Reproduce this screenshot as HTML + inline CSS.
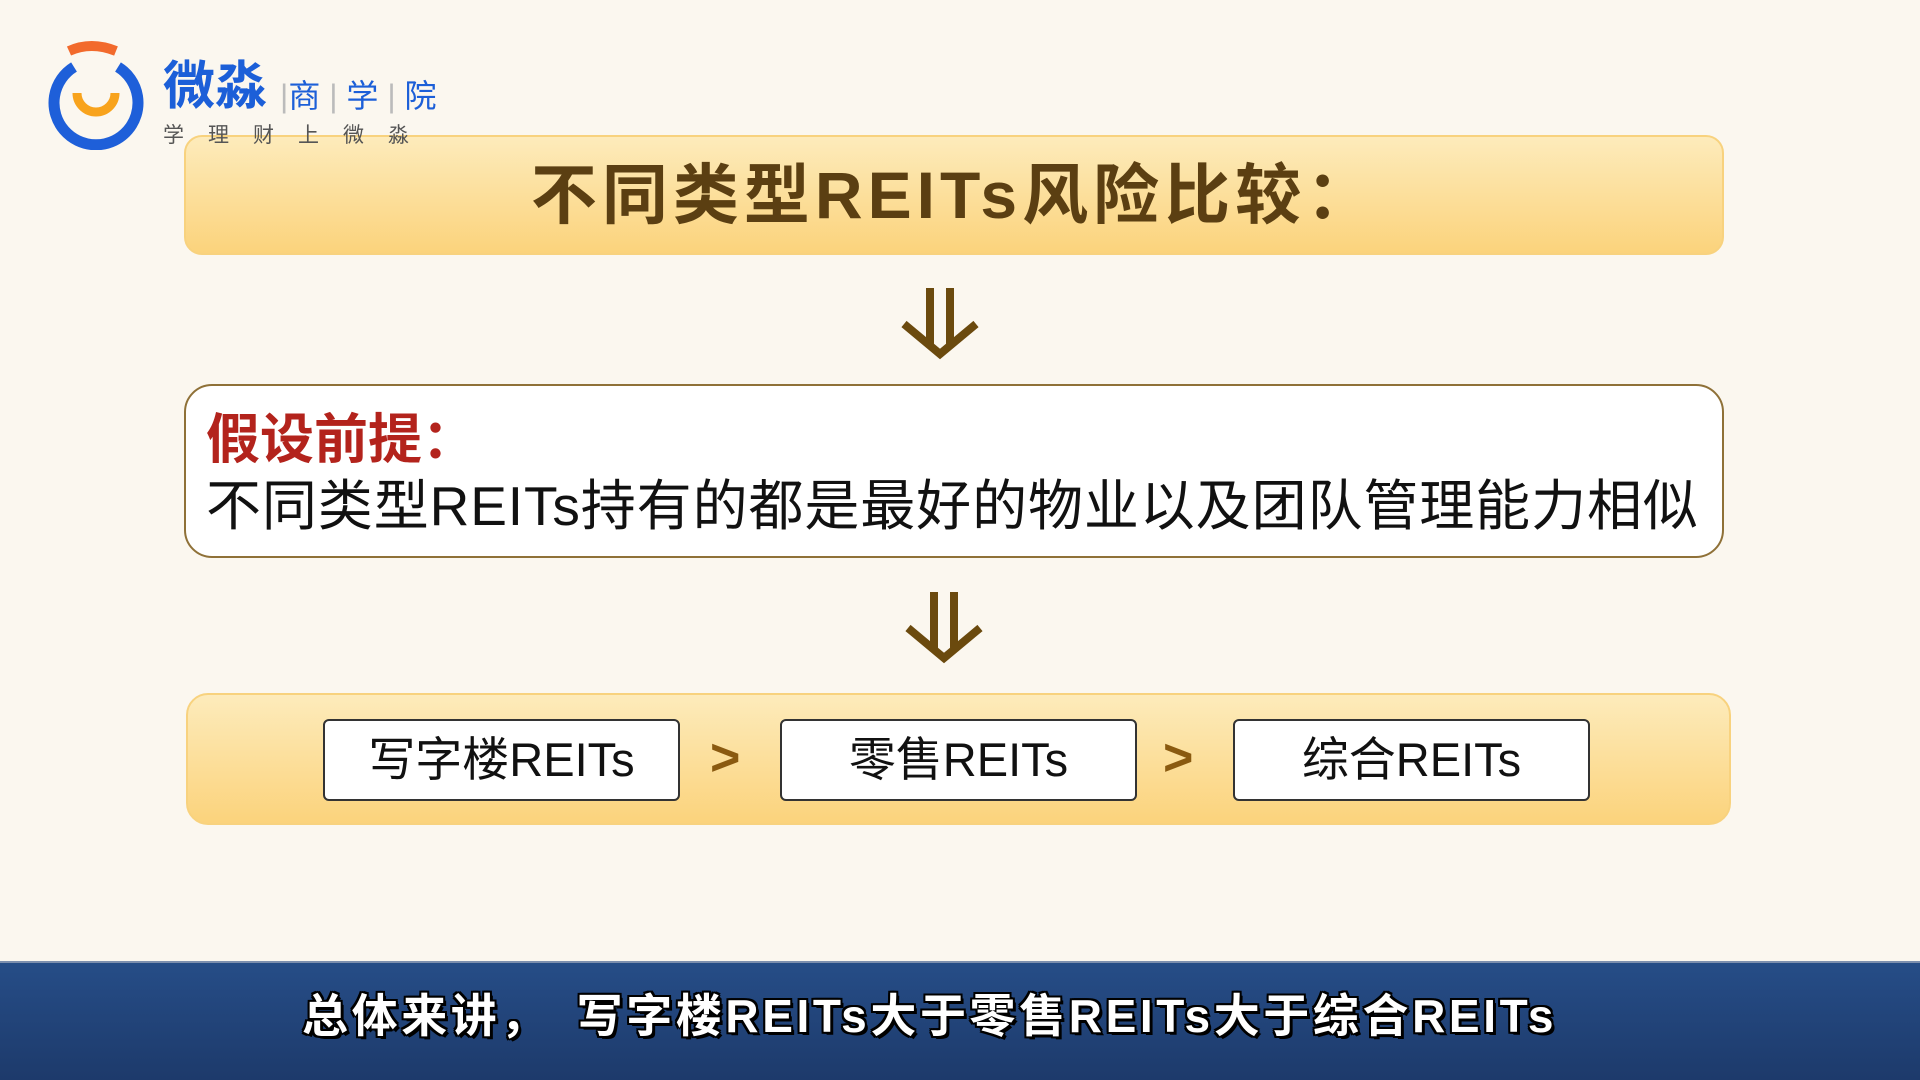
<!DOCTYPE html>
<html><head><meta charset="utf-8"><style>
*{margin:0;padding:0;box-sizing:border-box}
body{width:1920px;height:1080px;overflow:hidden;background:#fbf7ef;position:relative;font-family:"Liberation Sans","Noto Sans CJK SC",sans-serif}
.abs{position:absolute}
.yb{background:linear-gradient(#fdebbb,#fbd37c);border:2px solid #f8d27e}
.title{left:184px;top:135px;width:1540px;height:120px;border-radius:18px;text-align:center;font-size:66px;letter-spacing:5px;font-weight:bold;color:#5b3f12;line-height:116px}
.b2{left:184px;top:384px;width:1540px;height:174px;border-radius:28px;background:#fff;border:2px solid #8f7138}
.b2 .l1{position:absolute;left:20px;top:22px;font-size:54px;color:#b3231c;font-weight:bold;line-height:64px}
.b2 .l2{position:absolute;left:20px;top:88px;font-size:55px;letter-spacing:0.9px;color:#111;line-height:64px;white-space:nowrap}
.b3{left:186px;top:693px;width:1545px;height:132px;border-radius:22px}
.ib{top:719px;height:82px;width:357px;background:#fff;border:2px solid #333;border-radius:6px;text-align:center;font-size:47px;line-height:78px;color:#111}
.gt{top:728px;font-size:52px;color:#8a5a10;font-weight:bold}
.banner{left:0;top:961px;width:1920px;height:119px;background:linear-gradient(#264d87,#1d3a6b);border-top:2px solid #7d8fae}
.sub{left:302px;top:980px;font-size:46px;font-weight:bold;color:#fff;white-space:nowrap;letter-spacing:3.6px;
text-shadow:-2px 0 #000,2px 0 #000,0 -2px #000,0 2px #000,-2px -2px #000,2px 2px #000,-2px 2px #000,2px -2px #000,3px 3px #000}
</style></head><body>
<div class="abs yb title">不同类型REITs风险比较：</div>
<svg class="abs" style="left:36px;top:30px" width="120" height="120" viewBox="0 0 120 120">
<path d="M38 37 A42 42 0 1 0 82 37" fill="none" stroke="#1e5fd9" stroke-width="11"/>
<path d="M33 21 Q55 11 80 21" fill="none" stroke="#f26a2c" stroke-width="10"/>
<path d="M41 63 A17 17 0 0 0 79 63" fill="none" stroke="#f8a31c" stroke-width="9"/>
</svg>
<div class="abs" style="left:163px;top:58px;font-size:52px;color:#1c5fd8;font-weight:bold;line-height:58px">微淼</div>
<div class="abs" style="left:280px;top:76px;font-size:32px;color:#1c5fd8;line-height:40px;white-space:nowrap"><span style="color:#bbb">|</span>商 <span style="color:#bbb">|</span> 学 <span style="color:#bbb">|</span> 院</div>
<div class="abs" style="left:163px;top:119px;font-size:21px;color:#555;letter-spacing:24px;white-space:nowrap">学理财上微淼</div>
<svg class="abs" style="left:900px;top:288px" width="80" height="72" viewBox="0 0 80 72"><g fill="none" stroke="#6b4a0e" stroke-width="8"><path d="M30 0V58M50 0V58"/><path d="M4 36L40 66L76 36"/></g></svg>
<div class="abs b2"><div class="l1">假设前提：</div><div class="l2">不同类型REITs持有的都是最好的物业以及团队管理能力相似</div></div>
<svg class="abs" style="left:904px;top:592px" width="80" height="72" viewBox="0 0 80 72"><g fill="none" stroke="#6b4a0e" stroke-width="8"><path d="M30 0V58M50 0V58"/><path d="M4 36L40 66L76 36"/></g></svg>
<div class="abs yb b3"></div>
<div class="abs ib" style="left:323px">写字楼REITs</div>
<div class="abs gt" style="left:710px">&gt;</div>
<div class="abs ib" style="left:780px">零售REITs</div>
<div class="abs gt" style="left:1163px">&gt;</div>
<div class="abs ib" style="left:1233px">综合REITs</div>
<div class="abs banner"></div>
<div class="abs sub">总体来讲，　写字楼REITs大于零售REITs大于综合REITs</div>
</body></html>
